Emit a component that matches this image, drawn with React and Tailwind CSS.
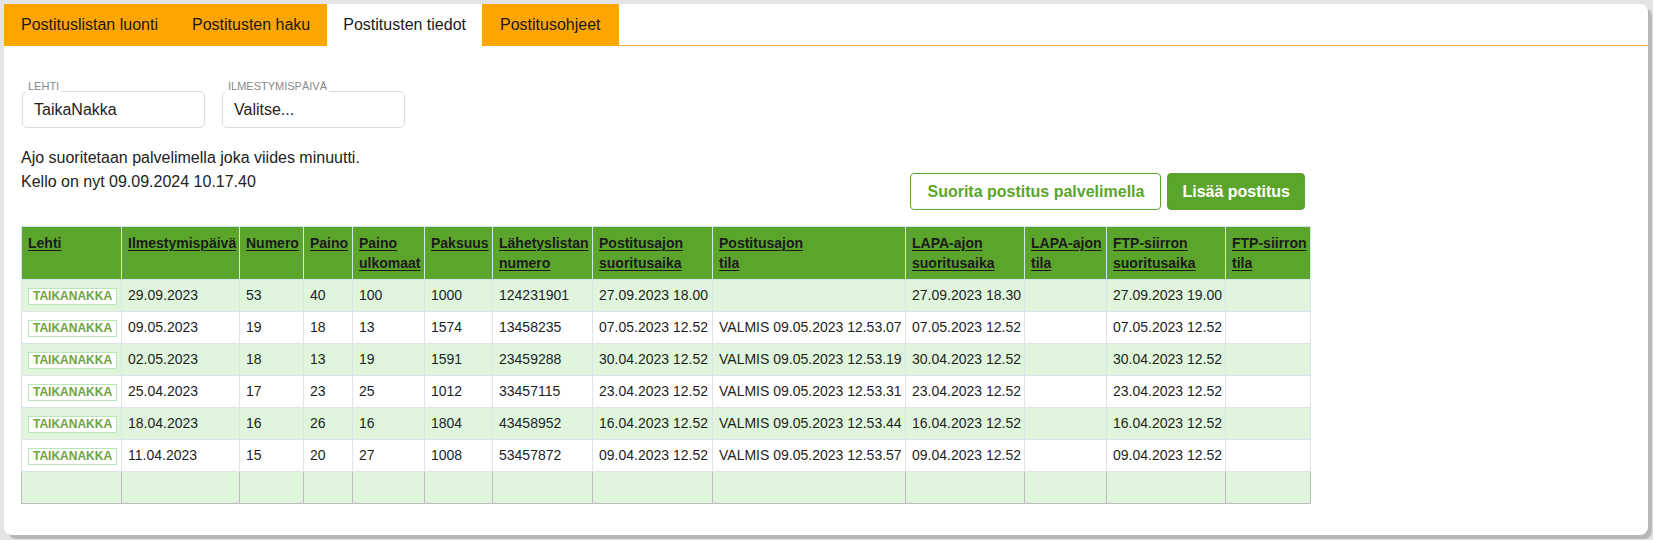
import React from "react";

const headers = [
  ["Lehti"],
  ["Ilmestymispäivä"],
  ["Numero"],
  ["Paino"],
  ["Paino", "ulkomaat"],
  ["Paksuus"],
  ["Lähetyslistan", "numero"],
  ["Postitusajon", "suoritusaika"],
  ["Postitusajon", "tila"],
  ["LAPA-ajon", "suoritusaika"],
  ["LAPA-ajon", "tila"],
  ["FTP-siirron", "suoritusaika"],
  ["FTP-siirron", "tila"],
];

const rows = [
  ["29.09.2023", "53", "40", "100", "1000", "124231901", "27.09.2023 18.00", "", "27.09.2023 18.30", "", "27.09.2023 19.00", ""],
  ["09.05.2023", "19", "18", "13", "1574", "13458235", "07.05.2023 12.52", "VALMIS 09.05.2023 12.53.07", "07.05.2023 12.52", "", "07.05.2023 12.52", ""],
  ["02.05.2023", "18", "13", "19", "1591", "23459288", "30.04.2023 12.52", "VALMIS 09.05.2023 12.53.19", "30.04.2023 12.52", "", "30.04.2023 12.52", ""],
  ["25.04.2023", "17", "23", "25", "1012", "33457115", "23.04.2023 12.52", "VALMIS 09.05.2023 12.53.31", "23.04.2023 12.52", "", "23.04.2023 12.52", ""],
  ["18.04.2023", "16", "26", "16", "1804", "43458952", "16.04.2023 12.52", "VALMIS 09.05.2023 12.53.44", "16.04.2023 12.52", "", "16.04.2023 12.52", ""],
  ["11.04.2023", "15", "20", "27", "1008", "53457872", "09.04.2023 12.52", "VALMIS 09.05.2023 12.53.57", "09.04.2023 12.52", "", "09.04.2023 12.52", ""],
];

function Field({ label, value, className }) {
  return (
    <div className={"relative w-[183px] h-[37px] border border-[#dcdcdc] rounded-[5px] pl-[11px] flex items-center text-[16px] text-[#222] " + (className || "")}>
      <span className="absolute left-[3px] top-[-13px] bg-white px-[2px] text-[11px] leading-[14px] text-[#888]">{label}</span>
      {value}
    </div>
  );
}

export default function App() {
  return (
    <div className="w-[1653px] h-[540px] bg-[#e4e4e4] pt-[4px] pl-[4px] font-['Liberation_Sans',Arial,sans-serif]">
      <div className="w-[1644px] h-[531px] bg-white rounded-[8px] rounded-tl-none shadow-[4px_4px_1px_#b6b6b6] flex flex-col overflow-hidden">
        {/* Tabs */}
        <div className="flex h-[42px] text-[16px] text-[#1a1a1a]">
          <div className="h-[42px] bg-[#ffa500] px-[17px] flex items-center">Postituslistan luonti</div>
          <div className="h-[42px] bg-[#ffa500] px-[17px] flex items-center">Postitusten haku</div>
          <div className="h-[42px] bg-white px-4 flex items-center">Postitusten tiedot</div>
          <div className="h-[42px] bg-[#ffa500] px-[18px] flex items-center">Postitusohjeet</div>
          <div className="flex-1 h-[42px] border-b border-[#f0a830]" />
        </div>

        {/* Content */}
        <div className="px-[17px] pt-[45px]">
          <div className="flex gap-[17px] ml-px">
            <Field label="LEHTI" value="TaikaNakka" />
            <Field label="ILMESTYMISPÄIVÄ" value="Valitse..." />
          </div>

          <div className="w-[1289px] flex justify-between items-start mt-[18px]">
            <div className="text-[16px] leading-6 text-[#222]">
              <div>Ajo suoritetaan palvelimella joka viides minuutti.</div>
              <div>Kello on nyt 09.09.2024 10.17.40</div>
            </div>
            <div className="flex gap-[6px] mt-[27px] mr-[5px]">
              <button className="h-[37px] px-4 border border-[#5ba52d] rounded-[4px] bg-white text-[#5ba52d] font-bold text-[16px]">
                Suorita postitus palvelimella
              </button>
              <button className="h-[37px] px-[14px] border border-[#5ba52d] rounded-[4px] bg-[#5ba52d] text-white font-bold text-[16px]">
                Lisää postitus
              </button>
            </div>
          </div>

          <table className="mt-[16px] w-[1289px] table-fixed border-collapse text-[14px] text-[#1e1e1e]">
            <colgroup>
              <col className="w-[100px]" />
              <col className="w-[118px]" />
              <col className="w-[64px]" />
              <col className="w-[49px]" />
              <col className="w-[72px]" />
              <col className="w-[68px]" />
              <col className="w-[100px]" />
              <col className="w-[120px]" />
              <col className="w-[193px]" />
              <col className="w-[119px]" />
              <col className="w-[82px]" />
              <col className="w-[119px]" />
              <col className="w-[85px]" />
            </colgroup>
            <thead>
              <tr className="bg-[#5ba52d]">
                {headers.map((h, i) => (
                  <th
                    key={i}
                    className="border border-[#d2e6ee] px-[6px] py-[6px] align-top text-left font-bold leading-5 text-[#1b1b1b] whitespace-nowrap"
                  >
                    <span className="underline decoration-1 underline-offset-2">
                      {h[0]}
                      {h[1] ? <br /> : null}
                      {h[1] || null}
                    </span>
                  </th>
                ))}
              </tr>
            </thead>
            <tbody>
              {rows.map((r, ri) => (
                <tr key={ri} className={ri % 2 === 0 ? "bg-[#dff5dc]" : "bg-white"}>
                  <td className="h-[32px] border border-[#dde3e8] px-[6px] align-middle">
                    <span className="inline-block border border-[#b9e5b9] bg-white px-[4px] text-[12px] leading-[15px] font-bold text-[#6ea43c]">
                      TAIKANAKKA
                    </span>
                  </td>
                  {r.map((c, ci) => (
                    <td key={ci} className="h-[32px] border border-[#dde3e8] px-[6px] align-middle whitespace-nowrap">
                      {c}
                    </td>
                  ))}
                </tr>
              ))}
              <tr className="bg-[#dff5dc]">
                {headers.map((_, i) => (
                  <td key={i} className="h-[32px] border border-[#bdbdbd] border-t-[#dde3e8]" />
                ))}
              </tr>
            </tbody>
          </table>
        </div>
      </div>
    </div>
  );
}
